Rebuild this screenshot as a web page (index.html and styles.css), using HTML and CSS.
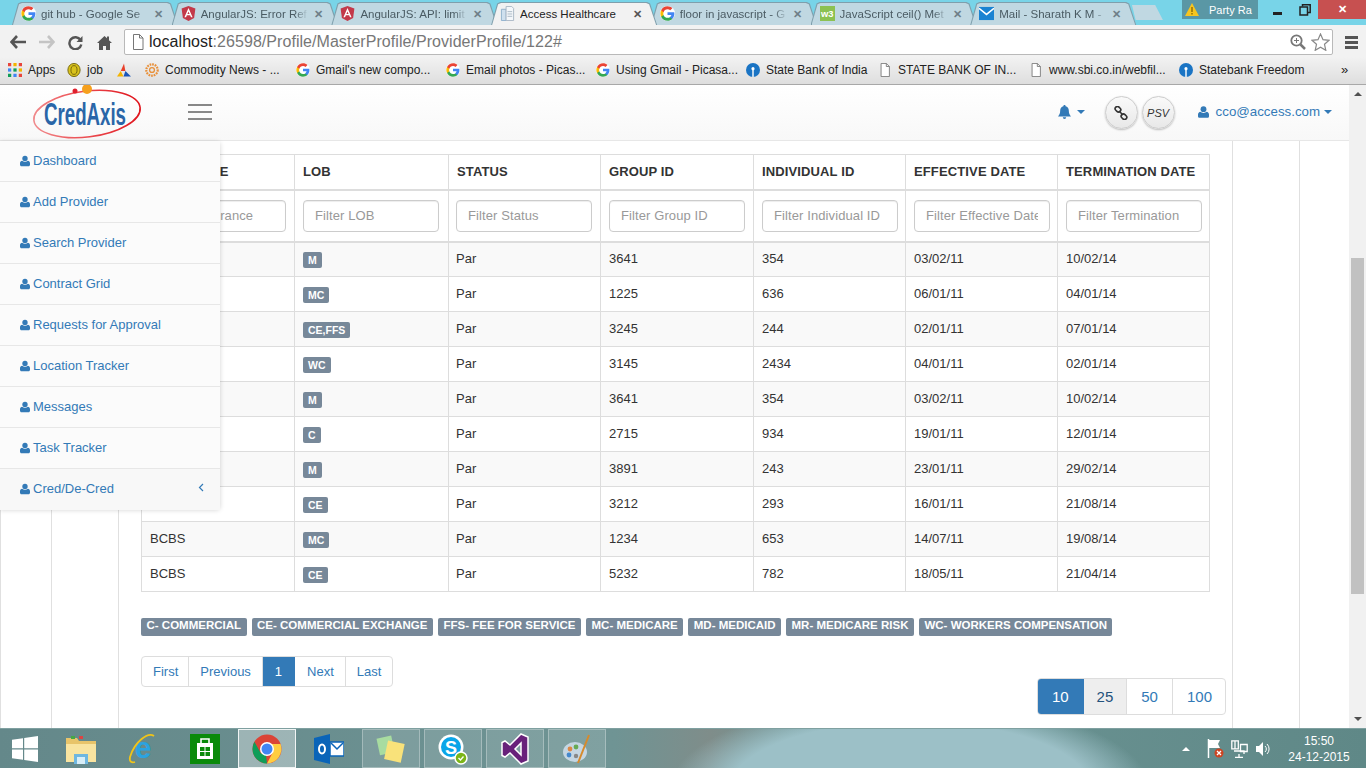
FILE: index.html
```html
<!DOCTYPE html>
<html lang="en">
<head>
<meta charset="utf-8">
<title>Access Healthcare</title>
<link rel="stylesheet" href="styles.css">
</head>
<body>
<svg class="defs" width="0" height="0" aria-hidden="true">
  <symbol id="g" viewBox="0 0 24 24">
    <circle cx="12" cy="12" r="12" fill="#fff"/>
    <path fill="#4285F4" d="M23 12.2c0-.8-.1-1.6-.2-2.3H12v4.4h6.2c-.3 1.4-1.1 2.6-2.3 3.4v2.9h3.7c2.2-2 3.4-5 3.4-8.4z"/>
    <path fill="#34A853" d="M12 23.5c3.1 0 5.7-1 7.6-2.8l-3.7-2.9c-1 .7-2.3 1.1-3.9 1.1-3 0-5.5-2-6.4-4.7H1.8v2.9c1.9 3.8 5.8 6.4 10.2 6.4z"/>
    <path fill="#FBBC05" d="M5.6 14.2c-.5-1.4-.5-3 0-4.4V6.9H1.8c-1.6 3.2-1.6 7 0 10.2z"/>
    <path fill="#EA4335" d="M12 5.1c1.7 0 3.2.6 4.4 1.7l3.3-3.3C17.7 1.6 15.1.5 12 .5 7.6.5 3.7 3.1 1.8 6.9l3.8 2.9C6.5 7.1 9 5.1 12 5.1z"/>
  </symbol>
  <symbol id="ng" viewBox="0 0 24 24">
    <path fill="#c3394a" d="M12 0 1 4l2 15 9 5 9-5 2-15z"/>
    <path fill="#fff" d="M12 3 5.5 18h2.6l1.3-3.3h5.2l1.3 3.3h2.6zm0 5.6 1.7 4.1h-3.4z"/>
  </symbol>
  <symbol id="doc" viewBox="0 0 14 16">
    <path fill="#fff" stroke="#777" d="M2.5.5h6l3.5 3.5v11.5H2.5z"/>
    <path fill="none" stroke="#777" d="M8.5.5V4H12"/>
  </symbol>
  <symbol id="user" viewBox="0 0 12 13">
    <circle cx="6" cy="3.4" r="3.2"/>
    <path d="M0 11V9.2C0 7.6 1.2 6.4 2.6 6.2 3.5 7 4.7 7.5 6 7.5s2.500-.5 3.400-1.300C10.800 6.400 12 7.600 12 9.200V11c0 1-.8 1.800-1.800 1.800H1.800C.8 12.800 0 12 0 11z"/>
  </symbol>
  <symbol id="sbi" viewBox="0 0 16 16">
    <circle cx="8" cy="8" r="8" fill="#1a74c4"/>
    <circle cx="8" cy="6.500" r="1.800" fill="#fff"/>
    <rect x="7.200" y="7" width="1.600" height="9" fill="#fff"/>
  </symbol>
</svg>

<header class="chrome">
  <div class="tabstrip">
    <div class="tab"><svg class="fav"><use href="#g"/></svg><span class="tab-title">git hub - Google Se</span><span class="tab-x">✕</span></div>
    <div class="tab"><svg class="fav"><use href="#ng"/></svg><span class="tab-title">AngularJS: Error Ref</span><span class="tab-x">✕</span></div>
    <div class="tab"><svg class="fav"><use href="#ng"/></svg><span class="tab-title">AngularJS: API: limit</span><span class="tab-x">✕</span></div>
    <div class="tab tab-on"><svg class="fav" viewBox="0 0 14 16"><path fill="#cfe0ee" stroke="#8fb0cc" d="M.5 3.500h5v12h-5z"/><path fill="#f4f7fa" stroke="#aab8c4" d="M5.500.5h6l2 2v13h-8z"/><path stroke="#aab8c4" d="M7 6h5M7 8.500h5M7 11h5"/></svg><span class="tab-title tab-title-full">Access Healthcare</span><span class="tab-x">✕</span></div>
    <div class="tab"><svg class="fav"><use href="#g"/></svg><span class="tab-title">floor in javascript - G</span><span class="tab-x">✕</span></div>
    <div class="tab"><svg class="fav" viewBox="0 0 16 16"><rect width="16" height="16" fill="#8cc152"/><text x="1" y="12" class="w3">w3</text></svg><span class="tab-title">JavaScript ceil() Met</span><span class="tab-x">✕</span></div>
    <div class="tab"><svg class="fav" viewBox="0 0 16 14"><rect width="16" height="14" fill="#1b83d2"/><path d="M0 1.500 8 8l8-6.500" fill="none" stroke="#fff" stroke-width="1.600"/></svg><span class="tab-title">Mail - Sharath K M -</span><span class="tab-x">✕</span></div>
    <div class="tab-new"></div>
    <div class="winctl">
      <div class="party"><svg width="14" height="13" viewBox="0 0 14 13"><path fill="#f7c51e" d="M7 0l7 13H0z"/><path fill="#7a5a00" d="M6.400 4h1.200v5H6.400zM6.400 10h1.200v1.400H6.400z"/></svg><span>Party Ra</span></div>
      <div class="win-btn"><span class="win-min"></span></div>
      <div class="win-btn"><svg width="12" height="12" viewBox="0 0 12 12"><path fill="none" stroke="#222" stroke-width="1.500" d="M3.500 2.500V.8h7.700v7.700H9"/><rect x="1" y="3" width="7.500" height="8" fill="none" stroke="#222" stroke-width="1.500"/></svg></div>
      <div class="win-close">✕</div>
    </div>
  </div>
  <div class="toolbar">
    <span class="tb-btn"><svg width="16" height="14" viewBox="0 0 16 14"><path d="M7 1 1.500 7 7 13M2 7h14" fill="none" stroke="#555" stroke-width="2.600"/></svg></span>
    <span class="tb-btn"><svg width="16" height="14" viewBox="0 0 16 14"><path d="M9 1l5.500 6L9 13M14 7H0" fill="none" stroke="#c4c4c4" stroke-width="2.600"/></svg></span>
    <span class="tb-btn"><svg width="15" height="15" viewBox="0 0 15 15"><path d="M12.500 5A6 6 0 1 0 13.300 9.500" fill="none" stroke="#555" stroke-width="2.400"/><path d="M14.500 1v6h-6z" fill="#555"/></svg></span>
    <span class="tb-btn"><svg width="15" height="15" viewBox="0 0 15 15"><path fill="#555" d="M7.500 1 0 8h2v7h4v-4h3v4h4V8h2l-3-2.800V1.500h-2v1.800z"/></svg></span>
    <div class="omni">
      <svg class="omni-doc"><use href="#doc"/></svg>
      <span class="url"><span class="url-host">localhost</span>:26598/Profile/MasterProfile/ProviderProfile/122#</span>
      <svg class="omni-ic" width="16" height="16" viewBox="0 0 16 16"><circle cx="6.500" cy="6.500" r="5.200" fill="none" stroke="#777" stroke-width="1.800"/><path d="M10.500 10.500 15 15" stroke="#777" stroke-width="2.500"/><path d="M4 6.500h5M6.500 4v5" stroke="#777"/></svg>
      <svg class="omni-ic" width="19" height="18" viewBox="0 0 19 18"><path d="M9.500 1l2.500 5.700 6 .6-4.500 4 1.300 6-5.300-3.100-5.300 3.100 1.300-6L1 7.300l6-.6z" fill="#fff" stroke="#888" stroke-width="1.200"/></svg>
    </div>
    <span class="tb-menu"><i></i><i></i><i></i></span>
  </div>
  <nav class="bookmarks">
    <span class="bm"><svg class="bm-ic" viewBox="0 0 13 13"><g><rect width="3" height="3" fill="#e8453c"/><rect x="5" width="3" height="3" fill="#f4b400"/><rect x="10" width="3" height="3" fill="#e8453c"/><rect y="5" width="3" height="3" fill="#4285f4"/><rect x="5" y="5" width="3" height="3" fill="#0f9d58"/><rect x="10" y="5" width="3" height="3" fill="#f4b400"/><rect y="10" width="3" height="3" fill="#0f9d58"/><rect x="5" y="10" width="3" height="3" fill="#4285f4"/><rect x="10" y="10" width="3" height="3" fill="#e8453c"/></g></svg>Apps</span>
    <span class="bm"><svg class="bm-ic" viewBox="0 0 15 16"><ellipse cx="7.500" cy="8" rx="7" ry="7.500" fill="#d9c21c" stroke="#6d5f08"/><ellipse cx="7.500" cy="8" rx="3.500" ry="5" fill="none" stroke="#6d5f08"/></svg>job</span>
    <span class="bm"><svg class="bm-ic" viewBox="0 0 15 14"><path fill="#e8402a" d="M7.500 0 4 8h5z"/><path fill="#f4b400" d="M4 8 0 14h7z"/><path fill="#1a55b8" d="M9 8l6 6H7z"/></svg></span>
    <span class="bm"><svg class="bm-ic" viewBox="0 0 16 16"><circle cx="8" cy="8" r="6.500" fill="none" stroke="#e8903a" stroke-width="2.500" stroke-dasharray="2 1"/><circle cx="8" cy="8" r="2.800" fill="none" stroke="#e8903a" stroke-width="1.500"/></svg>Commodity News - ...</span>
    <span class="bm"><svg class="bm-ic"><use href="#g"/></svg>Gmail's new compo...</span>
    <span class="bm"><svg class="bm-ic"><use href="#g"/></svg>Email photos - Picas...</span>
    <span class="bm"><svg class="bm-ic"><use href="#g"/></svg>Using Gmail - Picasa...</span>
    <span class="bm"><svg class="bm-ic"><use href="#sbi"/></svg>State Bank of India</span>
    <span class="bm"><svg class="bm-ic"><use href="#doc"/></svg>STATE BANK OF IN...</span>
    <span class="bm"><svg class="bm-ic"><use href="#doc"/></svg>www.sbi.co.in/webfil...</span>
    <span class="bm"><svg class="bm-ic"><use href="#sbi"/></svg>Statebank Freedom</span>
    <span class="bm-more">»</span>
  </nav>
</header>

<div class="viewport">
  <div class="page">
    <div class="topnav">
      <svg class="logo" width="112" height="56" viewBox="0 0 112 56">
        <defs><linearGradient id="ring" x1="0" x2="1" y1="0" y2="0"><stop offset="0" stop-color="#f08a8c"/><stop offset=".35" stop-color="#ee5a5e"/><stop offset="1" stop-color="#e0141c"/></linearGradient></defs>
        <ellipse cx="56" cy="30" rx="53.500" ry="23" fill="none" stroke="url(#ring)" stroke-width="1.600" transform="rotate(-7 56 30)"/>
        <circle cx="44" cy="7" r="2.500" fill="#e01f2d"/>
        <circle cx="56" cy="5" r="5" fill="#f5a01e"/>
        <text x="13" y="41" class="logo-text" textLength="82" lengthAdjust="spacingAndGlyphs">CredAxis</text>
      </svg>
      <div class="burger"><i></i><i></i><i></i></div>
      <div class="nav-right">
        <svg class="bell" width="13" height="14" viewBox="0 0 13 14"><path d="M6.500 0C5.800 0 5.400.5 5.400 1.200 3.400 1.700 2.200 3.400 2.200 5.500c0 3-.9 4.500-2.200 6h13c-1.300-1.500-2.200-3-2.200-6 0-2.100-1.200-3.800-3.200-4.300C7.600.5 7.200 0 6.500 0zM4.800 12.300a1.700 1.700 0 0 0 3.400 0z"/></svg>
        <span class="caret"></span>
        <span class="circle circle-first"><svg width="14" height="14" viewBox="0 0 14 14"><g fill="none" stroke="#333" stroke-width="1.600"><rect x="1" y="1" width="6" height="4.500" rx="2.200" transform="rotate(45 4 3.200)"/><rect x="7" y="8.500" width="6" height="4.500" rx="2.200" transform="rotate(45 10 10.700)"/><path d="M5 5l4 4"/></g></svg></span>
        <span class="circle circle-psv">PSV</span>
        <svg class="nav-user"><use href="#user"/></svg>
        <span class="email">cco@access.com</span>
        <span class="caret caret-end"></span>
      </div>
    </div>

    <div class="shell-a">
      <div class="shell-b">
        <main class="shell-c">
          <table class="grid">
            <colgroup><col class="c1"><col class="c2"><col class="c3"><col class="c4"><col class="c5"><col class="c6"><col class="c7"></colgroup>
            <thead>
              <tr class="head"><th>INSURANCE</th><th>LOB</th><th>STATUS</th><th>GROUP ID</th><th>INDIVIDUAL ID</th><th>EFFECTIVE DATE</th><th>TERMINATION DATE</th></tr>
              <tr class="filters">
                <th><input class="filter" placeholder="Filter Insurance"></th>
                <th><input class="filter" placeholder="Filter LOB"></th>
                <th><input class="filter" placeholder="Filter Status"></th>
                <th><input class="filter" placeholder="Filter Group ID"></th>
                <th><input class="filter" placeholder="Filter Individual ID"></th>
                <th><input class="filter" placeholder="Filter Effective Date"></th>
                <th><input class="filter" placeholder="Filter Termination"></th>
              </tr>
            </thead>
            <tbody>
              <tr><td></td><td><span class="tag">M</span></td><td>Par</td><td>3641</td><td>354</td><td>03/02/11</td><td>10/02/14</td></tr>
              <tr><td></td><td><span class="tag">MC</span></td><td>Par</td><td>1225</td><td>636</td><td>06/01/11</td><td>04/01/14</td></tr>
              <tr><td></td><td><span class="tag">CE,FFS</span></td><td>Par</td><td>3245</td><td>244</td><td>02/01/11</td><td>07/01/14</td></tr>
              <tr><td></td><td><span class="tag">WC</span></td><td>Par</td><td>3145</td><td>2434</td><td>04/01/11</td><td>02/01/14</td></tr>
              <tr><td></td><td><span class="tag">M</span></td><td>Par</td><td>3641</td><td>354</td><td>03/02/11</td><td>10/02/14</td></tr>
              <tr><td></td><td><span class="tag">C</span></td><td>Par</td><td>2715</td><td>934</td><td>19/01/11</td><td>12/01/14</td></tr>
              <tr><td></td><td><span class="tag">M</span></td><td>Par</td><td>3891</td><td>243</td><td>23/01/11</td><td>29/02/14</td></tr>
              <tr><td></td><td><span class="tag">CE</span></td><td>Par</td><td>3212</td><td>293</td><td>16/01/11</td><td>21/08/14</td></tr>
              <tr><td>BCBS</td><td><span class="tag">MC</span></td><td>Par</td><td>1234</td><td>653</td><td>14/07/11</td><td>19/08/14</td></tr>
              <tr><td>BCBS</td><td><span class="tag">CE</span></td><td>Par</td><td>5232</td><td>782</td><td>18/05/11</td><td>21/04/14</td></tr>
            </tbody>
          </table>

          <div class="legend">
            <span class="key">C- COMMERCIAL</span>
            <span class="key">CE- COMMERCIAL EXCHANGE</span>
            <span class="key">FFS- FEE FOR SERVICE</span>
            <span class="key">MC- MEDICARE</span>
            <span class="key">MD- MEDICAID</span>
            <span class="key">MR- MEDICARE RISK</span>
            <span class="key">WC- WORKERS COMPENSATION</span>
          </div>

          <div class="pagers">
            <div class="pager">
              <a>First</a><a>Previous</a><a class="on">1</a><a>Next</a><a>Last</a>
            </div>
            <div class="pager pager-lg">
              <a class="on">10</a><a class="soft">25</a><a>50</a><a>100</a>
            </div>
          </div>
        </main>
      </div>
    </div>

    <aside class="sidemenu">
      <a class="item"><svg class="ico"><use href="#user"/></svg>Dashboard</a>
      <a class="item"><svg class="ico"><use href="#user"/></svg>Add Provider</a>
      <a class="item"><svg class="ico"><use href="#user"/></svg>Search Provider</a>
      <a class="item"><svg class="ico"><use href="#user"/></svg>Contract Grid</a>
      <a class="item"><svg class="ico"><use href="#user"/></svg>Requests for Approval</a>
      <a class="item"><svg class="ico"><use href="#user"/></svg>Location Tracker</a>
      <a class="item"><svg class="ico"><use href="#user"/></svg>Messages</a>
      <a class="item"><svg class="ico"><use href="#user"/></svg>Task Tracker</a>
      <a class="item item-last"><svg class="ico"><use href="#user"/></svg>Cred/De-Cred<svg class="chev" width="6" height="9" viewBox="0 0 6 9"><path d="M5 1 1.500 4.500 5 8" fill="none" stroke="#337ab7" stroke-width="1.200"/></svg></a>
    </aside>
  </div>
  <div class="scrollbar">
    <span class="arrow arrow-up"></span>
    <span class="thumb"></span>
    <span class="arrow arrow-down"></span>
  </div>
</div>

<footer class="taskbar">
  <span class="start"><svg width="26" height="26" viewBox="0 0 26 26"><path fill="#fff" d="M0 3.700 11 2.200V12.300H0zM12.200 2 26 0V12.300H12.200zM0 13.600H11V23.700L0 22.200zM12.200 13.600H26V26L12.200 24z"/></svg></span>
  <span class="task"><svg width="32" height="30" viewBox="0 0 32 30"><path fill="#e8c46a" d="M1 4h11l2 3h17v21H1z"/><path fill="#f9e4a0" d="M1 10h30v18H1z"/><rect x="9" y="20" width="14" height="10" fill="#6fb7e0"/><rect x="12" y="23" width="8" height="7" fill="#d8eef8"/><rect x="6" y="2" width="4" height="3" fill="#45a845"/><rect x="14" y="2" width="4" height="3" fill="#d44"/></svg></span>
  <span class="task"><svg class="ie-ic" width="32" height="32" viewBox="0 0 32 32"><text x="16" y="25" class="ie">e</text><path d="M27 3C21 -1 8 8 3 24c-1 5 2 6 5 5" fill="none" stroke="#f0c419" stroke-width="1.800"/></svg></span>
  <span class="task"><svg width="30" height="30" viewBox="0 0 30 30"><rect width="30" height="30" fill="#0a8a0a"/><path d="M7 9h16v16H7z" fill="#fff"/><path d="M11 9V5h8v4" fill="none" stroke="#fff" stroke-width="1.600"/><path d="M10 13h4.500v4H10zM15.500 13H20v4h-4.500zM10 18h4.500v4H10zM15.500 18H20v4h-4.500z" fill="#0a8a0a"/></svg></span>
  <span class="task task-on"><svg width="30" height="30" viewBox="0 0 30 30"><circle cx="15" cy="15" r="14.500" fill="#db4437"/><path fill="#0f9d58" d="M15 29.500A14.500 14.500 0 0 1 2.400 7.800L9 19.500l5 1z"/><path fill="#ffcd40" d="M15 29.500A14.500 14.500 0 0 0 28.500 10H15l5.500 9z"/><circle cx="15" cy="15" r="7" fill="#fff"/><circle cx="15" cy="15" r="5.500" fill="#4285f4"/></svg></span>
  <span class="task"><svg width="30" height="30" viewBox="0 0 30 30"><path fill="#0a64b8" d="M0 4 16 0v30L0 26z"/><rect x="16" y="8" width="14" height="14" fill="#fff" stroke="#0a64b8" stroke-width="1.500"/><path d="M17 9l6 6 6-6" fill="none" stroke="#0a64b8" stroke-width="1.500"/><ellipse cx="8" cy="15" rx="3" ry="4.500" fill="none" stroke="#fff" stroke-width="2"/></svg></span>
  <span class="task task-box"><svg width="30" height="30" viewBox="0 0 30 30"><rect x="2" y="3" width="15" height="17" fill="#a8dca0" transform="rotate(-12 9 11)"/><rect x="10" y="8" width="17" height="19" fill="#f9e27a" transform="rotate(12 18 17)"/></svg></span>
  <span class="task task-box"><svg width="30" height="32" viewBox="0 0 30 32"><circle cx="13" cy="14" r="12.500" fill="#fff"/><circle cx="13" cy="14" r="10" fill="#0aa5e8"/><text x="13" y="21" class="skype">S</text><circle cx="23" cy="25" r="6" fill="#7cb518" stroke="#fff" stroke-width="1.500"/><path d="M20.500 25l2 2 3-3.500" fill="none" stroke="#fff" stroke-width="1.300"/></svg></span>
  <span class="task task-box"><svg width="28" height="32" viewBox="0 0 28 32"><path fill="#68217a" stroke="#fff" stroke-width="1.500" d="M20 1 27 4v24l-7 3L9 20l-5 4-3-1.500v-13L4 8l5 4zM20 10l-6 6 6 6z"/></svg></span>
  <span class="task task-box"><svg width="30" height="30" viewBox="0 0 30 30"><ellipse cx="13" cy="18" rx="12" ry="10" fill="#c5d6e2"/><circle cx="8" cy="15" r="2.400" fill="#d84"/><circle cx="14" cy="13" r="2.400" fill="#6a5"/><circle cx="7" cy="21" r="2.400" fill="#48c"/><circle cx="14" cy="22" r="2.200" fill="#888"/><path d="M27 1 16 29" stroke="#d68a2c" stroke-width="2"/></svg></span>
  <div class="tray">
    <span class="tray-up"></span>
    <svg width="17" height="19" viewBox="0 0 17 19"><path d="M1.500 0v19" stroke="#fff" stroke-width="1.500"/><path d="M2 1h11l-2 4 2 4H2z" fill="#fff"/><circle cx="12" cy="14" r="4.500" fill="#c42"/><path d="M10 12l4 4M14 12l-4 4" stroke="#fff" stroke-width="1.300"/></svg>
    <svg width="17" height="18" viewBox="0 0 17 18"><path d="M.8.8h6.500v8H.800zM4 .8v8M9.500 4.500h6.700v7H9.500zM3 11h10v3M8 14v3.500M4 17.500h8" fill="none" stroke="#fff" stroke-width="1.300"/></svg>
    <svg width="16" height="18" viewBox="0 0 16 18"><path d="M1 6h3l4-4v14l-4-4H1z" fill="#fff"/><path d="M10 6a4 4 0 0 1 0 6M12 4a7 7 0 0 1 0 10" fill="none" stroke="#fff"/></svg>
    <div class="clock"><span>15:50</span><span>24-12-2015</span></div>
  </div>
</footer>
</body>
</html>
```

FILE: styles.css
```css
* { box-sizing: border-box; }
html, body { margin: 0; height: 100%; overflow: hidden; }
body {
  display: flex;
  flex-direction: column;
  width: 1366px;
  height: 768px;
  font: 13px/20px "Liberation Sans", Arial, sans-serif;
  color: #333;
  background: #fff;
}
.defs { position: absolute; }

/* browser chrome */
.chrome { height: 85px; flex: none; display: flex; flex-direction: column; background: #78d4e8; }
.tabstrip { height: 25px; display: flex; align-items: flex-start; padding-left: 12px; position: relative; }
.tab {
  --shape: polygon(0 100%, 6px 6%, 9px 0, calc(100% - 16px) 0, calc(100% - 13px) 6%, calc(100% - 6px) 100%);
  width: 172px; height: 23px; margin-top: 2px; margin-right: -12.300px;
  display: flex; align-items: center; gap: 5px; padding: 0 20px 0 9px;
  font-size: 11.500px; color: #4a5b63; background: #7f9fac;
  clip-path: var(--shape);
  position: relative; z-index: 0;
}
.tab::before { content: ""; position: absolute; inset: 1px 1px 0; background: #c0d8e2; clip-path: var(--shape); z-index: -1; }
.tab-on { color: #222; z-index: 2; }
.tab-on::before { background: #f2f2f2; inset: 1px 1px 0; }
.fav { width: 15px; height: 15px; flex: none; }
.w3 { font: bold 10px "Liberation Sans", sans-serif; fill: #fff; }
.tab-title { flex: 1; white-space: nowrap; overflow: hidden; -webkit-mask-image: linear-gradient(90deg, #000 88%, transparent); mask-image: linear-gradient(90deg, #000 88%, transparent); }
.tab-title-full { -webkit-mask-image: none; mask-image: none; }
.tab-x { width: 11px; font-size: 11px; font-weight: bold; color: #6e7f88; flex: none; text-align: center; }
.tab-on .tab-x { color: #555; }
.tab-new { width: 31px; height: 15px; margin: 5px 0 0 2px; background: #c0d8e2; clip-path: polygon(0 0, 75% 0, 100% 100%, 12% 100%); }
.winctl { display: flex; margin-left: auto; height: 19px; }
.party { width: 76px; background: #5a97a5; color: #fff; font-size: 11px; display: flex; align-items: center; gap: 10px; padding-left: 3px; margin-right: 6px; }
.win-btn { width: 27px; display: flex; align-items: center; justify-content: center; }
.win-min { width: 9px; height: 3px; background: #222; margin-top: 7px; }
.win-close { width: 48px; background: #c75050; color: #fff; font-size: 11px; line-height: 19px; text-align: center; font-weight: bold; }

.toolbar { height: 32px; display: flex; align-items: center; padding: 2px 0 0 3px; background: #f2f2f2; }
.tb-btn { width: 29px; display: flex; justify-content: center; flex: none; }
.omni { margin-left: 5px; width: 1209px; height: 26px; flex: none; background: #fff; border: 1px solid #b9b9b9; border-radius: 2px; display: flex; align-items: center; padding: 0 2px 0 6px; }
.omni-doc { width: 14px; height: 16px; flex: none; margin-right: 4px; }
.url { flex: 1; font-size: 16px; letter-spacing: .05px; color: #777; white-space: nowrap; }
.url-host { color: #222; }
.omni-ic { margin-left: 5px; flex: none; }
.tb-menu { width: 33px; display: flex; flex-direction: column; align-items: center; gap: 2px; padding-left: 3px; }
.tb-menu i { display: block; width: 13px; height: 3px; background: #555; }

.bookmarks {
  height: 28px; display: grid; align-items: center; padding: 0 0 2px 8px;
  grid-template-columns: 59px 50px 28px 151px 150px 150px 150px 132px 151px 150px 162px 1fr;
  background: linear-gradient(#f2f2f2, #dedede); border-bottom: 1px solid #a8a8a8;
  font-size: 12px; color: #222;
}
.bm { display: flex; align-items: center; gap: 6px; white-space: nowrap; }
.bm-ic { width: 14px; height: 14px; flex: none; }
.bm-more { font-size: 13px; }

/* page */
.viewport { flex: 1; display: flex; min-height: 0; }
.page { width: 1349px; position: relative; display: flex; flex-direction: column; overflow: hidden; }
.topnav {
  height: 56px; flex: none; display: flex; align-items: center;
  background: linear-gradient(#fff, #f8f8f8); border-bottom: 1px solid #e7e7e7;
  padding-left: 31px;
}
.logo { flex: none; margin-top: -2px; overflow: visible; }
.logo-text { font: bold 32px "Liberation Sans Narrow", "Liberation Sans", sans-serif; fill: #2a66a8; }
.burger { width: 24px; margin-left: 45px; display: flex; flex-direction: column; gap: 5px; flex: none; margin-top: -1px; }
.burger i { display: block; height: 2px; background: #888; }
.nav-right { margin-left: auto; display: flex; align-items: center; padding-right: 17px; margin-top: -2px; color: #337ab7; }
.bell { fill: #337ab7; flex: none; }
.caret { width: 0; height: 0; border: 4px solid transparent; border-top-color: #337ab7; border-bottom: 0; margin-left: 6px; flex: none; }
.caret-end { margin-left: 4px; }
.circle {
  width: 33px; height: 33px; border-radius: 50%; background: linear-gradient(#fafafa, #e8e8e8); margin-top: 2px;
  border: 1px solid #ccc; box-shadow: 0 1px 2px rgba(0,0,0,.25); display: flex; align-items: center; justify-content: center; flex: none;
}
.circle-first { margin-left: 20px; }
.circle-psv { margin-left: 4px; font: italic 11px "Liberation Sans", sans-serif; color: #333; }
.nav-user { width: 11px; height: 12px; fill: #337ab7; margin-left: 23px; flex: none; }
.email { margin-left: 7px; font-size: 13.300px; }

.shell-a { flex: 1; min-height: 0; border-left: 1px solid #e0e0e0; border-right: 1px solid #e0e0e0; padding-left: 50px; width: 1300px; }
.shell-b { height: 100%; border-left: 1px solid #e0e0e0; padding: 0 66px; }
.shell-c { height: 100%; width: 1115px; border-left: 1px solid #e0e0e0; border-right: 1px solid #e0e0e0; padding: 13px 22px 0; }

.grid { width: 1068px; table-layout: fixed; border-collapse: collapse; }
.c1 { width: 153px; } .c2 { width: 154px; } .c3 { width: 152px; } .c4 { width: 153px; }
.c5 { width: 152px; } .c6 { width: 152px; } .c7 { width: 152px; }
.grid th, .grid td { border: 1px solid #ddd; padding: 0 8px; text-align: left; }
.head th { height: 35px; padding-bottom: 0; font-weight: bold; letter-spacing: .13px; border-bottom-width: 2px; color: #333; white-space: nowrap; }
.filters th { height: 52px; border-bottom-width: 2px; }
.filters th:nth-child(3), .grid td:nth-child(3) { padding-left: 7px; }
.filter { display: block; width: 136px; height: 32px; padding: 0 11px; border: 1px solid #ccc; border-radius: 4px; font: 13px "Liberation Sans", sans-serif; letter-spacing: .1px; color: #555; background: #fff; box-shadow: inset 0 1px 1px rgba(0,0,0,.075); }
.filter::placeholder { color: #999; opacity: 1; }
.grid tbody tr { height: 35px; }
.grid tbody tr:nth-child(odd) { background: #f9f9f9; }
.tag { display: inline-block; vertical-align: -1px; height: 16px; padding: 0 5px; border-radius: 2px; background: #778899; color: #fff; font: bold 10.500px/16px "Liberation Sans", sans-serif; }

.legend { display: flex; gap: 5px; margin-top: 26px; }
.key { height: 18px; padding: 0 5.500px; border-radius: 2px; background: #778899; color: #fff; font: bold 11.500px/15px "Liberation Sans", sans-serif; white-space: nowrap; }

.pagers { display: flex; justify-content: space-between; align-items: flex-start; margin-top: 20px; margin-right: -16px; }
.pager { display: flex; height: 31px; border: 1px solid #ddd; border-radius: 4px; overflow: hidden; color: #337ab7; line-height: 29px; }
.pager a { padding: 0 11px; border-right: 1px solid #ddd; }
.pager a:first-child { padding-right: 10px; }
.pager a:last-child { border-right: 0; }
.pager .on { background: #337ab7; color: #fff; border-color: #337ab7; padding: 0 12px; }
.pager .on + a { padding-left: 12px; }
.pager .soft { background: #eee; color: #23527c; }
.pager-lg { margin-top: 22px; height: 37px; line-height: 35px; font-size: 15px; }
.pager-lg a, .pager-lg a:first-child { padding: 0 14px; }
.pager-lg a:last-child { padding-right: 13px; }
.pager-lg .on { padding: 0 14px; }
.pager-lg .on + a { padding-left: 13px; padding-right: 13px; }

.sidemenu { position: absolute; left: 0; top: 56px; width: 220px; height: 368px; background: #fff; border-radius: 0 4px 4px 0; box-shadow: 0 1px 5px rgba(0,0,0,.18); }
.item { display: flex; align-items: center; height: 41px; padding: 0 0 0 20px; border-bottom: 1px solid #e7e7e7; color: #337ab7; background: #fbfbfb; }
.item-last { border-bottom: 0; background: #f8f8f8; padding-bottom: 1px; }
.ico { width: 10px; height: 12px; fill: #337ab7; margin-right: 3px; flex: none; }
.chev { margin-left: auto; margin-right: 16px; margin-top: -4px; }

.scrollbar { width: 17px; flex: none; background: #f1f1f1; display: flex; flex-direction: column; align-items: center; }
.arrow { width: 0; height: 0; border: 4px solid transparent; }
.arrow-up { border-bottom: 4px solid #505050; border-top: 0; margin-top: 7px; }
.thumb { width: 13px; height: 336px; background: #c1c1c1; margin-top: 162px; }
.arrow-down { border-top: 4px solid #505050; border-bottom: 0; margin-top: auto; margin-bottom: 7px; }

/* taskbar */
.taskbar {
  height: 40px; flex: none; display: flex; align-items: center; gap: 4px; border-top: 1px solid #7fa0a0;
  background:
    radial-gradient(ellipse 240px 90px at 910px 60px, #9cc0c7 75%, rgba(156,192,199,0)),
    linear-gradient(90deg, #64888a, #6f9494 45%, #7f8d8a 52%, #6e9696 60%, #5f8887);
}
.start { width: 50px; margin-right: -2px; padding-left: 12px; display: flex; }
.task { width: 58px; height: 39px; display: flex; align-items: center; justify-content: center; flex: none; }
.task-box { border: 1px solid rgba(255,255,255,.3); background: rgba(255,255,255,.12); }
.task-on { border: 1px solid rgba(255,255,255,.85); background: rgba(255,255,255,.35); }
.ie-ic { overflow: visible; }
.ie { font: bold 30px "Liberation Sans", sans-serif; fill: #2ba3e0; text-anchor: middle; }
.skype { font: bold 18px "Liberation Sans", sans-serif; fill: #fff; text-anchor: middle; }
.tray { margin-left: auto; display: flex; align-items: center; gap: 7px; color: #fff; padding-right: 14px; }
.tray-up { width: 0; height: 0; border: 4px solid transparent; border-bottom: 4px solid #fff; border-top: 0; margin-right: 10px; }
.clock { display: flex; flex-direction: column; align-items: center; width: 66px; margin-left: 8px; font-size: 12px; line-height: 16px; white-space: nowrap; }
```
